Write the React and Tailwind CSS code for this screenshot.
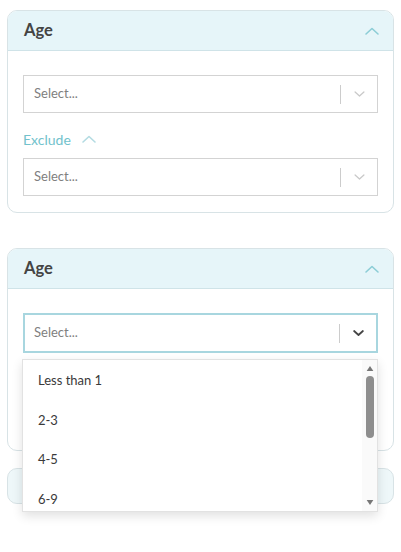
import React from "react";

function ChevronUp({ className }) {
  return (
    <svg viewBox="0 0 16 10" className={className} fill="none" stroke="currentColor" strokeWidth="1.6" strokeLinecap="round" strokeLinejoin="round">
      <path d="M2 8 L8 2.5 L14 8" />
    </svg>
  );
}

function ChevronDown({ className, strokeWidth = 1.6 }) {
  return (
    <svg viewBox="0 0 16 10" className={className} fill="none" stroke="currentColor" strokeWidth={strokeWidth} strokeLinecap="round" strokeLinejoin="round">
      <path d="M2.5 2.5 L8 7.5 L13.5 2.5" />
    </svg>
  );
}

function SelectBox({ focused }) {
  return (
    <div
      className={
        "flex items-center bg-white " +
        (focused ? "h-[40px] border-2 border-[#a8d6df]" : "h-[38px] border border-[#d3d3d3]")
      }
    >
      <span className={"flex-1 text-[13px] text-[#808080] " + (focused ? "pl-[9px]" : "pl-[10px]")}>Select...</span>
      <span className="h-[19px] w-px bg-[#cccccc]" />
      <span className="flex w-[36px] items-center justify-center">
        {focused ? (
          <ChevronDown className="h-[8px] w-[13px] text-[#444]" strokeWidth="2.2" />
        ) : (
          <ChevronDown className="h-[8px] w-[13px] text-[#c9c9c9]" />
        )}
      </span>
    </div>
  );
}

function Header() {
  return (
    <div className="flex h-[40px] items-center justify-between rounded-t-[9px] border-b border-[#cfe3e8] bg-[#e6f5f9] pl-4 pr-[13px]">
      <span className="text-[16.5px] font-bold text-[#444]">Age</span>
      <ChevronUp className="h-[10px] w-[16px] text-[#8ccdd6]" />
    </div>
  );
}

function AgeCard({ focused, children }) {
  const hidden = focused ? "invisible" : "";
  return (
    <div className="relative rounded-[10px] border border-[#d8e3e6] bg-white">
      <Header />
      <div className="px-[15px] pt-6 pb-4">
        <SelectBox focused={focused} />
        <div className={"flex h-[20px] items-center gap-[10px] " + hidden + (focused ? " mt-[14px] mb-[9px]" : " mt-[16px] mb-[9px]")}>
          <span className="text-[14px] text-[#72c2cc]">Exclude</span>
          <ChevronUp className="h-[10px] w-[16px] text-[#b3dbe2]" />
        </div>
        <div className={hidden}>
          <SelectBox />
        </div>
        {children}
      </div>
    </div>
  );
}

const options = ["Less than 1", "2-3", "4-5", "6-9"];

function Menu() {
  return (
    <div className="absolute left-[14px] right-[15px] top-[110px] z-10 flex h-[153px] border border-[#e2e2e2] bg-white shadow-[0_4px_10px_rgba(0,0,0,0.12)]">
      <div className="flex-1 pt-[1px]">
        {options.map((o) => (
          <div key={o} className="flex h-[39.5px] items-center pl-[15px] text-[13px] text-[#3a3a3a]">
            {o}
          </div>
        ))}
      </div>
      <div className="flex w-[15px] flex-col items-center bg-[#fafafa] py-[6px]">
        <svg viewBox="0 0 8 6" className="h-[5px] w-[8px] text-[#777]" fill="currentColor">
          <path d="M4 0 L8 6 L0 6 Z" />
        </svg>
        <div className="mt-[5px] h-[62px] w-[8px] rounded-full bg-[#8e8e8e]" />
        <div className="flex-1" />
        <svg viewBox="0 0 8 6" className="h-[5px] w-[8px] text-[#777]" fill="currentColor">
          <path d="M0 0 L8 0 L4 6 Z" />
        </svg>
      </div>
    </div>
  );
}

export default function App() {
  return (
    <div className="min-h-[552px] bg-white px-[7px] pt-[10px] font-['Lato',sans-serif]">
      <AgeCard />
      <div className="mt-[35px]">
        <AgeCard focused>
          <Menu />
        </AgeCard>
      </div>
      <div className="mt-[17px] h-[36px] rounded-[10px] border border-[#d8e3e6] bg-[#eef7f9]" />
    </div>
  );
}
